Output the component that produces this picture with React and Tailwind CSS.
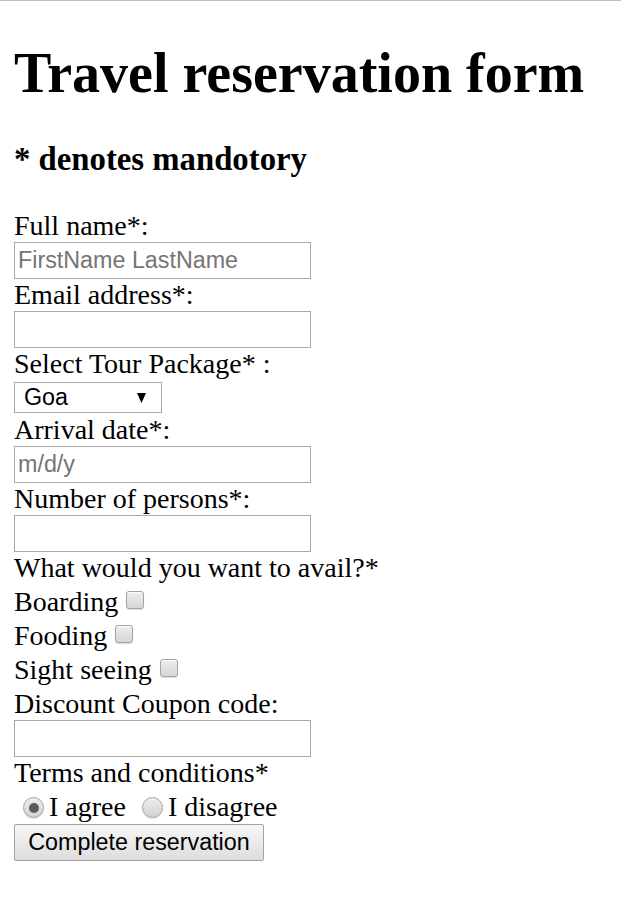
import React from 'react';

// フォームのラベル行（Times 相当、line-height: normal）
const Label = ({ children }) => (
  <div className="h-[32.2px] leading-[normal] whitespace-nowrap">{children}</div>
);

const TextBox = ({ placeholder }) => (
  <input
    type="text"
    placeholder={placeholder}
    className="block w-[297px] h-[37px] shrink-0 border border-[#a9a9a9] bg-white px-[3px] font-['Liberation_Sans',Arial,sans-serif] text-[23.3px] text-black placeholder:text-[#757575] outline-none"
  />
);

const CheckBox = () => (
  <span className="inline-block w-[18px] h-[18px] rounded-[3px] border border-[#a3a3a3] bg-gradient-to-b from-[#ededed] to-[#d6d6d6] shadow-[inset_0_1px_0_#fff,0_1px_1px_rgba(0,0,0,0.15)]" />
);

const CheckRow = ({ label }) => (
  <div className="flex h-[34.4px] items-start shrink-0">
    <span className="mt-[1px] leading-[normal] whitespace-nowrap">{label}</span>
    <span className="ml-[8px] mt-[6px] flex">
      <CheckBox />
    </span>
  </div>
);

const Radio = ({ checked }) => (
  <span className="flex w-[21px] h-[21px] items-center justify-center rounded-full border border-[#a3a3a3] bg-gradient-to-b from-[#ededed] to-[#d3d3d3] shadow-[0_1px_1px_rgba(0,0,0,0.12)]">
    {checked && <span className="w-[10px] h-[10px] rounded-full bg-[#5a5a5a]" />}
  </span>
);

export default function App() {
  return (
    <div className="min-h-[911px] w-full bg-white border-t border-[#bdbdbd] px-[14px] font-['Liberation_Serif','Times_New_Roman',serif] text-[28px] text-black">
      <h1 className="mt-[40px] mb-[35.5px] text-[56px] font-bold leading-[normal] whitespace-nowrap">
        Travel reservation form
      </h1>
      <h3 className="mb-[32.5px] text-[32.76px] font-bold leading-[normal]">* denotes mandotory</h3>

      <form className="flex flex-col items-start" onSubmit={(e) => e.preventDefault()}>
        <Label>Full name*:</Label>
        <TextBox placeholder="FirstName LastName" />
        <Label>Email address*:</Label>
        <TextBox placeholder="" />
        <Label>Select Tour Package* :</Label>

        {/* セレクトボックス */}
        <div className="flex h-[33.4px] items-start shrink-0">
          <div className="mt-[1.6px] flex w-[148px] h-[31px] items-center justify-between border border-[#a9a9a9] bg-white pl-[9px] pr-[15px] font-['Liberation_Sans',Arial,sans-serif] text-[23.3px]">
            <span className="leading-none">Goa</span>
            <svg width="9" height="10" viewBox="0 0 9 10" className="mt-[1px]">
              <path d="M0 0 H9 L4.5 10 Z" fill="#000" />
            </svg>
          </div>
        </div>

        <Label>Arrival date*:</Label>
        <TextBox placeholder="m/d/y" />
        <Label>Number of persons*:</Label>
        <TextBox placeholder="" />
        <Label>What would you want to avail?*</Label>

        <CheckRow label="Boarding" />
        <CheckRow label="Fooding" />
        <CheckRow label="Sight seeing" />

        <Label>Discount Coupon code:</Label>
        <TextBox placeholder="" />
        <Label>Terms and conditions*</Label>

        {/* ラジオボタン */}
        <div className="flex h-[35px] items-start shrink-0">
          <span className="ml-[9px] mt-[8px] flex">
            <Radio checked />
          </span>
          <span className="ml-[5px] mt-[2px] leading-[normal] whitespace-nowrap">I agree</span>
          <span className="ml-[16px] mt-[8px] flex">
            <Radio />
          </span>
          <span className="ml-[5px] mt-[2px] leading-[normal] whitespace-nowrap">I disagree</span>
        </div>

        <button
          type="submit"
          className="w-[250px] h-[37px] rounded-[2px] border border-[#a3a3a3] bg-gradient-to-b from-[#f7f7f7] to-[#dddddd] font-['Liberation_Sans',Arial,sans-serif] text-[23.3px] text-black leading-none"
        >
          Complete reservation
        </button>
      </form>
    </div>
  );
}
